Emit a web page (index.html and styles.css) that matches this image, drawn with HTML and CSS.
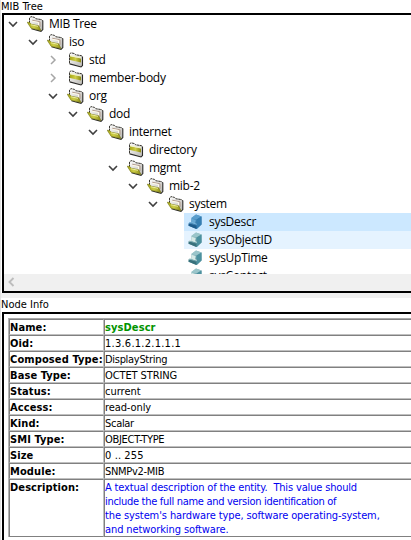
FILE: index.html
```html
<!DOCTYPE html>
<html lang="en">
<head>
<meta charset="utf-8">
<title>MIB Tree</title>
<link rel="stylesheet" href="styles.css">
</head>
<body>
<svg class="defs" aria-hidden="true">
  <linearGradient id="paper" x2="1" y2="1"><stop offset="0" stop-color="#fff"/><stop offset="1" stop-color="#b8b6b0"/></linearGradient>
  <linearGradient id="gold" x2="1" y2="0"><stop offset="0" stop-color="#a8a818"/><stop offset=".5" stop-color="#cece48"/><stop offset="1" stop-color="#8a8a14"/></linearGradient>
  <linearGradient id="teal" x2="1" y2="1"><stop offset="0" stop-color="#c4e0df"/><stop offset="1" stop-color="#286f80"/></linearGradient>
  <linearGradient id="blue" x2="1" y2="1"><stop offset="0" stop-color="#6fb0da"/><stop offset="1" stop-color="#175c91"/></linearGradient>
  <symbol id="open" viewBox="0 0 17 16">
    <path d="M2.5 8V2L4 .6l3.5.8 1.2 1.3 5.8.9 1.2 1.2v8.7L14 15.3 4 12.5z" fill="url(#paper)"/>
    <path d="M2.5 7V2L4 .6l3.5.8 1.2 1.3 5.8.9 1.2 1.2" fill="none" stroke="#3b3933" stroke-width="1" stroke-dasharray="2.5 .5"/>
    <path d="M15.8 4.6v9L14 15.3l-9.5-2.5" fill="none" stroke="#2a2927" stroke-width="1.1"/>
    <path d="M5.2 4.2l7.8 1.6v5" fill="none" stroke="#ad9383" stroke-width=".9"/>
    <path d="M5.5 5.3l6 1.2v3" fill="none" stroke="#fffbe8"/>
    <path d="M.2 6.2l2.6.4 1.1 1.5 7.8 1.7 2.2 4.7-9.9-2.3z" fill="url(#gold)" stroke="#74740f" stroke-width=".6"/>
    <path d="M4 8.8l7 1.5" stroke="#eeee9c" stroke-width="1"/>
  </symbol>
  <symbol id="closed" viewBox="0 0 17 16">
    <path d="M2.5 11.5V2L4 .8l3.5.8 1.2 1.2 5.6.8 1 1v9.2L14 15z" fill="url(#paper)"/>
    <path d="M2.5 11.5V2L4 .8l3.5.8 1.2 1.2 5.6.8 1.2 1.1" fill="none" stroke="#3b3933" stroke-width="1" stroke-dasharray="2.5 .5"/>
    <path d="M3 4.2l11 2.3v4L3 8z" fill="url(#gold)"/>
    <path d="M3 3.6l11 2.3" stroke="#f5f5c4"/>
    <path d="M15.5 4.6v9L14 15 2.7 11.9" fill="none" stroke="#2a2927" stroke-width="1.1"/>
  </symbol>
  <symbol id="leaf" viewBox="0 0 16 16">
    <path d="M3.8 4L8.5 .5l5.5 2v8L9.2 15 1 11.8l.5-3L3.8 8z" fill="url(#teal)"/>
    <path d="M3.8 4L8.5 .5l5.5 2-5 3z" fill="#9ac5ca"/>
    <path d="M9 5.5l5-3v8L9.2 15z" fill="#4c919f"/>
    <path d="M4 4.7l4.2 1.4-.7 4L4 8.7z" fill="#d6e9e6"/>
    <path d="M1.2 9.3l7.7 2.4V15L1 11.8z" fill="#38717c"/>
    <path d="M1.5 9L4 8.3l5.3 2" fill="none" stroke="#d6e9e6"/>
  </symbol>
  <symbol id="leaf-selected" viewBox="0 0 16 16">
    <path d="M3.8 4L8.5 .5l5.5 2v8L9.2 15 1 11.8l.5-3L3.8 8z" fill="url(#blue)"/>
    <path d="M3.8 4L8.5 .5l5.5 2-5 3z" fill="#5b9fce"/>
    <path d="M9 5.5l5-3v8L9.2 15z" fill="#347eb2"/>
    <path d="M4 4.7l4.2 1.4-.7 4L4 8.7z" fill="#66a8d4"/>
    <path d="M1.2 9.3l7.7 2.4V15L1 11.8z" fill="#1d5b8b"/>
    <path d="M1.5 9L4 8.3l5.3 2" fill="none" stroke="#78b4dc"/>
  </symbol>
  <symbol id="down" viewBox="0 0 10 10"><path d="M1 3l4 4 4-4" fill="none" stroke="#404040" stroke-width="1.6"/></symbol>
  <symbol id="right" viewBox="0 0 10 10"><path d="M3 1l4 4-4 4" fill="none" stroke="#a6a6a6" stroke-width="1.5"/></symbol>
</svg>
<main class="window">
  <h2 class="title">MIB Tree</h2>
  <section class="panel tree-panel">
    <ul class="tree">
      <li class="node l0"><svg class="arrow"><use href="#down"/></svg><svg class="icon"><use href="#open"/></svg><span>MIB Tree</span></li>
      <li class="node l1"><svg class="arrow"><use href="#down"/></svg><svg class="icon"><use href="#open"/></svg><span>iso</span></li>
      <li class="node l2"><svg class="arrow"><use href="#right"/></svg><svg class="icon"><use href="#closed"/></svg><span>std</span></li>
      <li class="node l2"><svg class="arrow"><use href="#right"/></svg><svg class="icon"><use href="#closed"/></svg><span>member-body</span></li>
      <li class="node l2"><svg class="arrow"><use href="#down"/></svg><svg class="icon"><use href="#open"/></svg><span>org</span></li>
      <li class="node l3"><svg class="arrow"><use href="#down"/></svg><svg class="icon"><use href="#open"/></svg><span>dod</span></li>
      <li class="node l4"><svg class="arrow"><use href="#down"/></svg><svg class="icon"><use href="#open"/></svg><span>internet</span></li>
      <li class="node l5"><i class="arrow"></i><svg class="icon"><use href="#closed"/></svg><span>directory</span></li>
      <li class="node l5"><svg class="arrow"><use href="#down"/></svg><svg class="icon"><use href="#open"/></svg><span>mgmt</span></li>
      <li class="node l6"><svg class="arrow"><use href="#down"/></svg><svg class="icon"><use href="#open"/></svg><span>mib-2</span></li>
      <li class="node l7"><svg class="arrow"><use href="#down"/></svg><svg class="icon"><use href="#open"/></svg><span>system</span></li>
      <li class="node leaf selected"><svg class="icon"><use href="#leaf-selected"/></svg><span>sysDescr</span></li>
      <li class="node leaf hover"><svg class="icon"><use href="#leaf"/></svg><span>sysObjectID</span></li>
      <li class="node leaf"><svg class="icon"><use href="#leaf"/></svg><span>sysUpTime</span></li>
      <li class="node leaf"><svg class="icon"><use href="#leaf"/></svg><span>sysContact</span></li>
    </ul>
    <div class="scrollbar"><svg viewBox="0 0 8 10"><path d="M5.5 1l-4 4 4 4" fill="none" stroke="#bdbdbd" stroke-width="1.9"/></svg></div>
  </section>
  <div class="splitter"></div>
  <h2 class="title info-title">Node Info</h2>
  <section class="panel info-panel">
    <dl class="info">
      <dt>Name:</dt><dd class="name">sysDescr</dd>
      <dt>Oid:</dt><dd class="oid">1.3.6.1.2.1.1.1</dd>
      <dt class="composed">Composed Type:</dt><dd class="tight">DisplayString</dd>
      <dt>Base Type:</dt><dd>OCTET STRING</dd>
      <dt>Status:</dt><dd class="current">current</dd>
      <dt>Access:</dt><dd>read-only</dd>
      <dt>Kind:</dt><dd class="tight">Scalar</dd>
      <dt>SMI Type:</dt><dd class="tight">OBJECT-TYPE</dd>
      <dt>Size</dt><dd class="size">0 .. 255</dd>
      <dt>Module:</dt><dd class="tight">SNMPv2-MIB</dd>
      <dt class="tall">Description:</dt><dd class="tall description">A textual description of the entity.  This value should
<span class="tight">include the full name and version identification of</span>
<span class="wide">the system's hardware type, software operating-system,
and networking software.</span></dd>
    </dl>
  </section>
</main>
</body>
</html>
```
FILE: styles.css
```css
* { box-sizing: border-box; }
body { margin: 0; width: 411px; height: 540px; overflow: hidden; background: #fff; color: #000; }
.defs { position: absolute; width: 0; height: 0; }
.window { display: flex; flex-direction: column; height: 540px; border-left: 1px solid #e3e3e3; }
.title {
  margin: 0; height: 13px; flex: none; padding-left: 0;
  font: 11px/13px "DejaVu Sans Condensed", "DejaVu Sans", sans-serif;
  font-stretch: condensed; letter-spacing: 0; white-space: pre;
}
.info-title { height: 14px; line-height: 14px; }
.panel { margin-left: 1px; border: solid #000; border-width: 2px 0 2px 2px; overflow: hidden; flex: none; }
.tree-panel { height: 280px; display: flex; flex-direction: column; }
.tree { height: 259px; flex: none; margin: 0; padding: 0; overflow: hidden; list-style: none; font: 12px/18px "Open Sans", sans-serif; letter-spacing: -.28px; }
.node { display: flex; align-items: center; height: 18px; white-space: pre; }
.arrow { width: 10px; height: 10px; margin: 0 9px 0 4px; flex: none; }
.icon { width: 17px; height: 16px; margin-right: 5px; flex: none; }
.l1 { padding-left: 20px; } .l2 { padding-left: 40px; } .l3 { padding-left: 60px; }
.l4 { padding-left: 80px; } .l5 { padding-left: 100px; } .l6 { padding-left: 120px; } .l7 { padding-left: 140px; }
.leaf { margin-left: 180px; padding-left: 3px; }
.selected { background: #cce8ff; }
.hover { background: #e5f3ff; }
.scrollbar { height: 17px; flex: none; background: #f0f0f0; padding: 3px 0 0 4px; }
.scrollbar svg { display: block; width: 8px; height: 10px; }
.splitter { height: 5px; flex: none; background: #f0f0f0; }
.info-panel { height: 228px; flex: none; border-bottom: 0; padding: 4px 0 0 4px; }
.info {
  display: grid; grid-template-columns: 95px 1fr; grid-auto-rows: 16px; margin: 0;
  grid-template-rows: repeat(10, 16px) 58px;
  border-top: 1px solid #a8a8a8; border-left: 1px solid #b4b4b4;
  font: 11px/15px "DejaVu Sans Condensed", "DejaVu Sans", sans-serif;
  font-stretch: condensed; letter-spacing: -.1px; white-space: pre;
}
.info dt, .info dd { margin: 0; border-top: 1px solid #808080; border-bottom: 1px solid #c0c0c0; }
.info dt { border-left: 1px solid #808080; border-right: 1px solid #c0c0c0; font-weight: bold; letter-spacing: .1px; }
.info .composed { letter-spacing: .12px; }
.info dd { border-left: 1px solid #808080; }
.info .tight { letter-spacing: -.3px; }
.info .oid { letter-spacing: .25px; }
.info .size { letter-spacing: .1px; }
.info .current { letter-spacing: 0; }
.info .name { color: #009300; font-weight: bold; letter-spacing: .1px; }
.info .tall { border-bottom-color: #808080; }
.info .description { color: #0000f0; line-height: 14px; padding-top: 1px; letter-spacing: -.16px; }
.info .wide { letter-spacing: -.1px; }
```
